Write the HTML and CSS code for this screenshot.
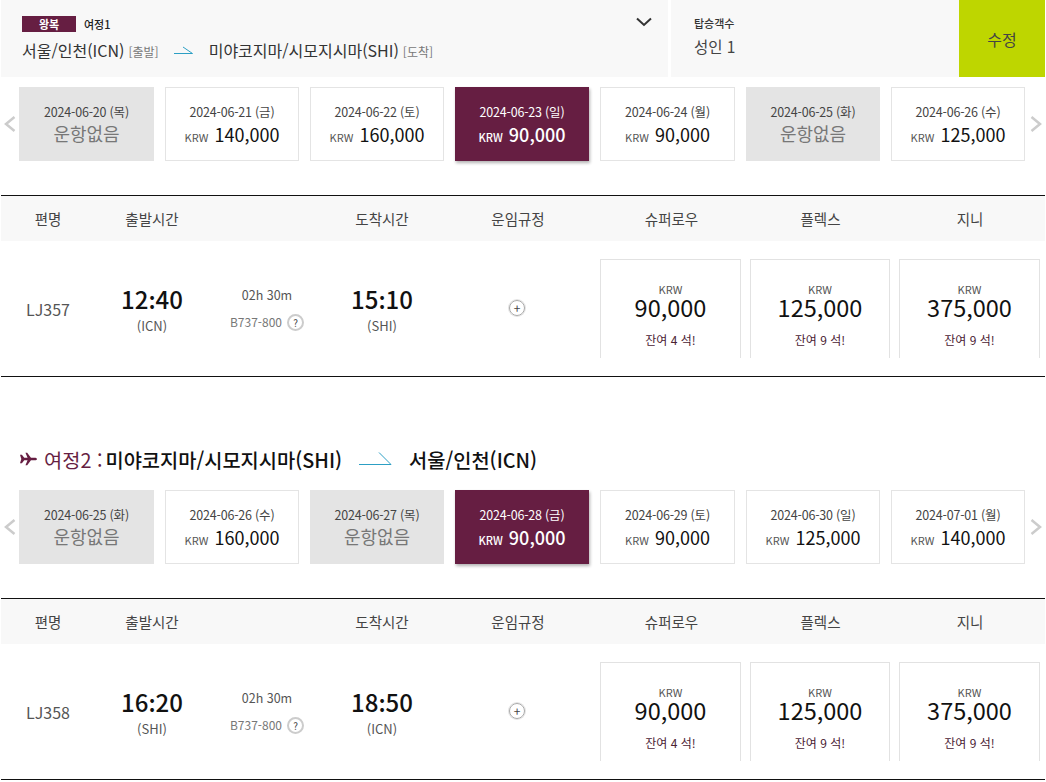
FILE: index.html
```html
<!DOCTYPE html>
<html lang="ko">
<head>
    <meta charset="UTF-8">
    <title>항공권 선택</title>
    <link rel="stylesheet" href="styles.css">
</head>
<body>
    <div class="search-bar">
        <div class="route-box">
            <div class="route-top">
                <span class="trip-badge">왕복</span>
                <span class="trip-label">여정1</span>
            </div>
            <div class="route-line">
                <span>서울/인천(ICN)</span>
                <span class="route-tag">[출발]</span>
                <svg class="arrow-small" width="19" height="10" viewBox="0 0 19 10"><path d="M0 8.5H18.5L9 2" fill="none" stroke="#2c9fc4" stroke-width="1"/></svg>
                <span>미야코지마/시모지시마(SHI)</span>
                <span class="route-tag">[도착]</span>
            </div>
            <svg class="route-toggle" width="16" height="10" viewBox="0 0 16 10"><path d="M1 1.5L8 8L15 1.5" fill="none" stroke="#333" stroke-width="2"/></svg>
        </div>
        <div class="pax-box">
            <div class="pax-label">탑승객수</div>
            <div class="pax-value">성인 1</div>
        </div>
        <button class="edit-btn">수정</button>
    </div>

    <div class="date-strip">
        <svg class="strip-arrow" width="12" height="16" viewBox="0 0 12 16"><path d="M10.5 1L2 8L10.5 15" fill="none" stroke="#ccc" stroke-width="2.5"/></svg>
        <div class="date-list">
            <div class="date-card none"><div class="date-text">2024-06-20 (목)</div><div class="no-flight">운항없음</div></div>
            <div class="date-card"><div class="date-text">2024-06-21 (금)</div><div class="date-price"><small>KRW</small>140,000</div></div>
            <div class="date-card"><div class="date-text">2024-06-22 (토)</div><div class="date-price"><small>KRW</small>160,000</div></div>
            <div class="date-card active"><div class="date-text">2024-06-23 (일)</div><div class="date-price"><small>KRW</small>90,000</div></div>
            <div class="date-card"><div class="date-text">2024-06-24 (월)</div><div class="date-price"><small>KRW</small>90,000</div></div>
            <div class="date-card none"><div class="date-text">2024-06-25 (화)</div><div class="no-flight">운항없음</div></div>
            <div class="date-card"><div class="date-text">2024-06-26 (수)</div><div class="date-price"><small>KRW</small>125,000</div></div>
        </div>
        <svg class="strip-arrow right" width="12" height="16" viewBox="0 0 12 16"><path d="M1.5 1L10 8L1.5 15" fill="none" stroke="#ccc" stroke-width="2.5"/></svg>
    </div>

    <div class="flight-table">
        <div class="table-head">
            <div>편명</div><div>출발시간</div><div></div><div>도착시간</div><div>운임규정</div><div>슈퍼로우</div><div>플렉스</div><div>지니</div>
        </div>
        <div class="table-row">
            <div class="flight-no">LJ357</div>
            <div class="time-cell"><div class="time">12:40</div><div class="airport">(ICN)</div></div>
            <div class="duration-cell">
                <div class="duration">02h 30m</div>
                <div class="aircraft">B737-800 <span class="help-icon">?</span></div>
            </div>
            <div class="time-cell"><div class="time">15:10</div><div class="airport">(SHI)</div></div>
            <div class="rule-cell"><span class="plus-icon">+</span></div>
            <div class="fare-group">
                <div class="fare-card"><div class="fare-cur">KRW</div><div class="fare-price">90,000</div><div class="fare-seat">잔여 4 석!</div></div>
                <div class="fare-card"><div class="fare-cur">KRW</div><div class="fare-price">125,000</div><div class="fare-seat">잔여 9 석!</div></div>
                <div class="fare-card"><div class="fare-cur">KRW</div><div class="fare-price">375,000</div><div class="fare-seat">잔여 9 석!</div></div>
            </div>
        </div>
    </div>

    <h2 class="leg-title">
        <svg class="plane-icon" width="17" height="14" viewBox="0 0 18 14"><path d="M0 2.5L2 2.5L4.5 5.6H8L5.8 0.5H7.6L11.6 5.6H15.5C17 5.6 18 6.3 18 7C18 7.7 17 8.4 15.5 8.4H11.6L7.6 13.5H5.8L8 8.4H4.5L2 11.5H0L1.4 7Z" fill="#661e42"/></svg>
        <span class="leg-num">여정2 :</span>
        <span>미야코지마/시모지시마(SHI)</span>
        <svg class="arrow-large" width="33" height="14" viewBox="0 0 33 14"><path d="M0 12.5H32L20 0.5" fill="none" stroke="#2c9fc4" stroke-width="1"/></svg>
        <span>서울/인천(ICN)</span>
    </h2>

    <div class="date-strip">
        <svg class="strip-arrow" width="12" height="16" viewBox="0 0 12 16"><path d="M10.5 1L2 8L10.5 15" fill="none" stroke="#ccc" stroke-width="2.5"/></svg>
        <div class="date-list">
            <div class="date-card none"><div class="date-text">2024-06-25 (화)</div><div class="no-flight">운항없음</div></div>
            <div class="date-card"><div class="date-text">2024-06-26 (수)</div><div class="date-price"><small>KRW</small>160,000</div></div>
            <div class="date-card none"><div class="date-text">2024-06-27 (목)</div><div class="no-flight">운항없음</div></div>
            <div class="date-card active"><div class="date-text">2024-06-28 (금)</div><div class="date-price"><small>KRW</small>90,000</div></div>
            <div class="date-card"><div class="date-text">2024-06-29 (토)</div><div class="date-price"><small>KRW</small>90,000</div></div>
            <div class="date-card"><div class="date-text">2024-06-30 (일)</div><div class="date-price"><small>KRW</small>125,000</div></div>
            <div class="date-card"><div class="date-text">2024-07-01 (월)</div><div class="date-price"><small>KRW</small>140,000</div></div>
        </div>
        <svg class="strip-arrow right" width="12" height="16" viewBox="0 0 12 16"><path d="M1.5 1L10 8L1.5 15" fill="none" stroke="#ccc" stroke-width="2.5"/></svg>
    </div>

    <div class="flight-table">
        <div class="table-head">
            <div>편명</div><div>출발시간</div><div></div><div>도착시간</div><div>운임규정</div><div>슈퍼로우</div><div>플렉스</div><div>지니</div>
        </div>
        <div class="table-row">
            <div class="flight-no">LJ358</div>
            <div class="time-cell"><div class="time">16:20</div><div class="airport">(SHI)</div></div>
            <div class="duration-cell">
                <div class="duration">02h 30m</div>
                <div class="aircraft">B737-800 <span class="help-icon">?</span></div>
            </div>
            <div class="time-cell"><div class="time">18:50</div><div class="airport">(ICN)</div></div>
            <div class="rule-cell"><span class="plus-icon">+</span></div>
            <div class="fare-group">
                <div class="fare-card"><div class="fare-cur">KRW</div><div class="fare-price">90,000</div><div class="fare-seat">잔여 4 석!</div></div>
                <div class="fare-card"><div class="fare-cur">KRW</div><div class="fare-price">125,000</div><div class="fare-seat">잔여 9 석!</div></div>
                <div class="fare-card"><div class="fare-cur">KRW</div><div class="fare-price">375,000</div><div class="fare-seat">잔여 9 석!</div></div>
            </div>
        </div>
    </div>
</body>
</html>
```

FILE: styles.css
```css
* {
    margin: 0;
    padding: 0;
    box-sizing: border-box;
    font-family: "Noto Sans CJK KR", "Noto Sans", sans-serif;
}

body {
    background: #fff;
    color: #333;
    width: 1046px;
    overflow-x: hidden;
}

.search-bar {
    display: flex;
    height: 77px;
    margin-left: 1px;
}

.route-box {
    position: relative;
    width: 667px;
    background: #f8f8f8;
    padding: 16px 0 0 21px;
}

.route-top {
    display: flex;
    align-items: center;
    gap: 8px;
    height: 16px;
}

.trip-badge {
    width: 54px;
    height: 16px;
    background: #661e42;
    color: #fff;
    font-size: 11px;
    font-weight: 700;
    line-height: 16px;
    text-align: center;
}

.trip-label {
    font-size: 11px;
    font-weight: 500;
    color: #222;
}

.route-line {
    display: flex;
    align-items: center;
    margin-top: 6px;
    font-size: 16px;
    height: 24px;
    color: #333;
}

.route-tag {
    font-size: 12px;
    color: #777;
    margin: 2px 0 0 4px;
}

.arrow-small {
    margin: 0 16px 0 15px;
}

.route-toggle {
    position: absolute;
    top: 17px;
    right: 16px;
}

.pax-box {
    width: 288px;
    margin-left: 3px;
    background: #f8f8f8;
    padding: 15px 0 0 23px;
}

.pax-label {
    font-size: 11px;
    font-weight: 500;
    color: #333;
}

.pax-value {
    font-size: 15.5px;
    margin-top: 4px;
    color: #444;
}

.edit-btn {
    width: 86px;
    background: #bed600;
    border: none;
    font-size: 16px;
    color: #444;
}

.date-strip {
    display: grid;
    grid-template-columns: 19px 1006px 21px;
    align-items: center;
    margin-top: 10px;
}

.strip-arrow {
    margin-left: 4px;
}

.strip-arrow.right {
    margin-left: 5px;
}

.date-list {
    display: grid;
    grid-template-columns: 135px 134px 134px 134px 135px 134px 134px;
    gap: 11px;
}

.date-card {
    height: 74px;
    border: 1px solid #e4e4e4;
    background: #fff;
    text-align: center;
    padding-top: 15px;
}

.date-card.none {
    background: #e4e4e4;
}

.date-card.active {
    background: #661e42;
    border-color: #661e42;
    color: #fff;
    box-shadow: 1px 2px 3px rgba(0, 0, 0, 0.3);
}

.date-text {
    font-size: 12.5px;
    line-height: 18px;
    letter-spacing: -0.2px;
    color: #444;
}

.active .date-text {
    color: #fff;
}

.date-price {
    font-size: 18px;
    line-height: 26px;
    color: #111;
}

.date-price small {
    font-size: 11px;
    color: #555;
    margin-right: 6px;
}

.active .date-price,
.active .date-price small {
    color: #fff;
    font-weight: 500;
}

.no-flight {
    font-size: 18px;
    line-height: 24px;
    color: #777;
}

.flight-table {
    margin: 34px 0 0 1px;
    width: 1044px;
    border-top: 1px solid #111;
    border-bottom: 1px solid #111;
}

.table-head {
    display: grid;
    grid-template-columns: 94px 114px 116px 114px 158px 149px 149px 150px;
    height: 45px;
    background: #f8f8f8;
    font-size: 14.5px;
    line-height: 45px;
    text-align: center;
    color: #444;
}

.table-row {
    display: grid;
    grid-template-columns: 94px 114px 116px 114px 161px 1fr;
    height: 135px;
    padding-top: 18px;
    align-items: start;
}

.flight-no {
    font-size: 16px;
    color: #555;
    text-align: center;
    margin-top: 38px;
}

.time-cell {
    text-align: center;
    margin-top: 23px;
}

.time {
    font-family: "Noto Sans CJK JP", "Noto Sans", sans-serif;
    font-size: 24px;
    font-weight: 500;
    line-height: 34px;
    color: #111;
    font-feature-settings: "calt" 0, "case" 0, "locl" 0;
}

.airport {
    font-size: 13px;
    line-height: 18px;
    margin-top: 1px;
    color: #555;
}

.duration-cell {
    text-align: center;
    margin-top: 27px;
    font-size: 12.5px;
    color: #555;
}

.duration {
    line-height: 18px;
}

.aircraft {
    display: flex;
    align-items: center;
    justify-content: center;
    gap: 5px;
    margin-top: 9px;
    font-size: 12px;
    color: #777;
    line-height: 18px;
}

.help-icon {
    width: 17px;
    height: 17px;
    border: 2px solid #ccc;
    border-radius: 50%;
    font-size: 10px;
    line-height: 13px;
    text-align: center;
    color: #444;
}

.rule-cell {
    text-align: center;
    padding-right: 5px;
    margin-top: 35px;
}

.plus-icon {
    display: inline-block;
    width: 16px;
    height: 16px;
    border: 1px solid #aaa;
    box-shadow: 0 0 0 1px #e4e4e4;
    border-radius: 50%;
    font-size: 12px;
    line-height: 13px;
    text-align: center;
    color: #444;
}

.fare-group {
    display: grid;
    grid-template-columns: 141px 140px 141px;
    gap: 9px;
}

.fare-card {
    height: 99px;
    border: 1px solid #e2e2e2;
    border-bottom: none;
    text-align: center;
    padding-top: 22px;
}

.fare-cur {
    font-size: 11px;
    line-height: 14px;
    color: #555;
}

.fare-price {
    font-size: 23.5px;
    line-height: 22px;
    color: #111;
}

.fare-seat {
    font-size: 12px;
    line-height: 16px;
    margin-top: 14px;
    color: #4a2233;
}

.leg-title {
    display: flex;
    align-items: center;
    height: 24px;
    margin: 70px 0 19px 20px;
    font-size: 19.8px;
    font-weight: 500;
    color: #111;
}

.plane-icon {
    margin-right: 7px;
}

.leg-num {
    color: #661e42;
    font-weight: 400;
    margin-right: 3px;
}

.arrow-large {
    margin: 0 17px;
}
```
